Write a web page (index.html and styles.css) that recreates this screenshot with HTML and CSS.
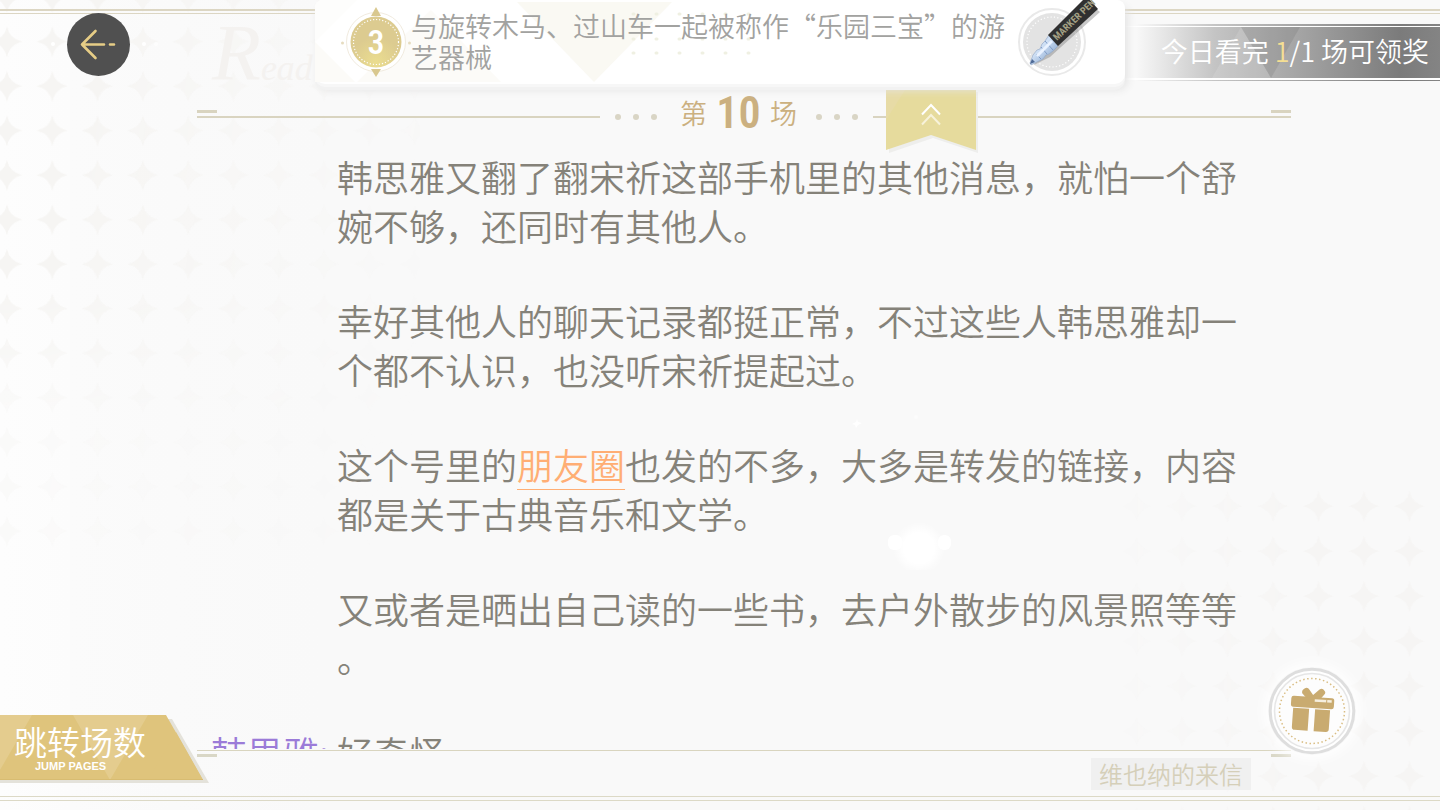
FILE: index.html
```html
<!DOCTYPE html>
<html lang="zh-CN">
<head>
<meta charset="utf-8">
<title>维也纳的来信</title>
<meta name="viewport" content="width=device-width, initial-scale=1">
<link rel="stylesheet" href="styles.css">
</head>
<body>
<div class="reader">
  <svg class="stars stars-left" aria-hidden="true">
    <defs>
      <pattern id="star-a" width="45.3" height="44.5" patternUnits="userSpaceOnUse" x="-15.6" y="19.5">
        <path d="M22.600 7Q25 19.500 38 22.200Q25 25 22.600 38Q20 25 7 22.200Q20 19.500 22.600 7Z" fill="#f6f5f3"/>
      </pattern>
    </defs>
    <rect width="100%" height="100%" fill="url(#star-a)"/>
  </svg>
  <svg class="stars stars-right" aria-hidden="true">
    <defs>
      <pattern id="star-b" width="45.5" height="45" patternUnits="userSpaceOnUse" x="4" y="4">
        <path d="M22.600 7Q25 19.500 38 22.200Q25 25 22.600 38Q20 25 7 22.200Q20 19.500 22.600 7Z" fill="#f6f5f4"/>
      </pattern>
    </defs>
    <rect width="100%" height="100%" fill="url(#star-b)"/>
  </svg>
  <svg class="glow" viewBox="0 0 120 170" aria-hidden="true">
    <defs><radialGradient id="soft"><stop offset=".6" stop-color="#fff"/><stop offset="1" stop-color="#fff" stop-opacity="0"/></radialGradient></defs>
    <circle cx="79" cy="148" r="26" fill="url(#soft)"/>
    <rect x="48" y="135" width="14" height="15" rx="6" fill="#fff"/>
    <rect x="98" y="135" width="13" height="15" rx="6" fill="#fff"/>
    <path d="M12 24l4-2 1-3 1 3 4 1-4 2-2 3-1-3z" fill="#fff"/>
    <circle cx="76" cy="17" r="2" fill="#fcfcfc"/>
  </svg>

  <header class="topbar">
    <div class="corner">
      <button class="back" type="button" aria-label="返回">
        <svg viewBox="0 0 63 63" fill="none" stroke="#e6cd86" stroke-width="2.600" stroke-linecap="round" stroke-linejoin="round" aria-hidden="true">
          <path d="M28.500 18L15 31.500L28.500 45M15 31.500H37M43 31.500H47"/>
        </svg>
      </button>
      <i class="spark"></i>
      <span class="script"><b>R</b>ead</span>
    </div>

    <section class="hint">
      <svg class="hint-art" viewBox="0 0 810 84" aria-hidden="true">
        <path d="M0 42L40 82H0zM42 82L78 46L114 82zM78 46L116 10L186 82H114z" fill="#fcfbf8"/>
        <path d="M0 42L42 0H8Q0 0 0 8z" fill="#fdfdfc"/>
        <path d="M202 2H357L279 82z" fill="#faf9f3"/>
        <g stroke="#eff0e2" stroke-width="3" stroke-linecap="round" stroke-dasharray="1 22">
          <path d="M318 14H436M318 39H436M318 53H436"/>
        </g>
      </svg>
      <svg class="badge" viewBox="0 0 70 76" role="img" aria-label="3">
        <defs><radialGradient id="gold" cy=".9"><stop stop-color="#ebdd8f"/><stop offset="1" stop-color="#dccb90"/></radialGradient></defs>
        <circle cx="35" cy="38" r="29.500" fill="#fff" stroke="#f1ebdf"/>
        <circle cx="35" cy="38" r="25.500" fill="url(#gold)"/>
        <circle cx="35" cy="38" r="22.500" fill="none" stroke="#fff" stroke-width="1.200" stroke-dasharray="1.200 1.900"/>
        <path d="M35 3l5 9H30zM35 73l5-8H30z" fill="#d9c88f"/>
        <circle cx="1.500" cy="39" r="1.500" fill="#e6dcc0"/><circle cx="68.500" cy="39" r="1.500" fill="#e6dcc0"/>
        <text class="badge-number" x="35" y="50" text-anchor="middle">3</text>
      </svg>
      <p class="hint-text">与旋转木马、过山车一起被称作“乐园三宝”的游艺器械</p>
      <svg class="pen" viewBox="0 0 100 84" role="img" aria-label="Marker pen">
        <defs>
          <linearGradient id="tube" x1="0" y1="0" x2="1" y2="1"><stop stop-color="#8da7cd"/><stop offset=".4" stop-color="#cfe0f5"/><stop offset="1" stop-color="#6f91bf"/></linearGradient>
        </defs>
        <circle cx="42" cy="42" r="33" fill="#fff" stroke="#e9e9e9" stroke-width="2"/>
        <circle cx="42" cy="42" r="29" fill="#e3e3e3"/>
        <circle cx="42" cy="42" r="25" fill="none" stroke="#fff" stroke-width="1.200" stroke-dasharray="1.200 2.200"/>
        <path d="M24 65L40 57L51 47L90 12L85 8L45 44L26 62z" fill="#777" opacity=".4"/>
        <path d="M20 63L23 55L27 50L30 49L32 44L35 41L39 35L48 46L43 51L39 54L36 55L33 59L29 61L21 65z" fill="url(#tube)" stroke="#8fa5c5" stroke-width=".6"/>
        <path d="M20 64L22 59L25 62z" fill="#4e6a96"/>
        <path d="M26 54L31 59M31 47L37 54M35 41L43 50" stroke="#7f9bc6" stroke-width="1" fill="none"/>
        <path d="M27 56L42 41" stroke="#e9f2ff" stroke-width="3"/>
        <path d="M38 35L73 0H80L88 9L48 46z" fill="#303030"/>
        <text class="pen-text" transform="translate(47 41) rotate(-44)">MARKER PEN</text>
      </svg>
    </section>

    <div class="reward">
      <svg class="reward-art" viewBox="0 0 315 51" preserveAspectRatio="none" aria-hidden="true">
        <path d="M116 0L87 51H146z" fill="#fff" opacity=".12"/>
        <path d="M116 0H175L146 51z" fill="#555" opacity=".16"/>
      </svg>
      <span class="reward-text">今日看完 <em>1</em>/1 场可领奖</span>
    </div>
  </header>

  <div class="chapter">
    <div class="rule rule-start"></div>
    <div class="dots"><i></i><i></i><i></i></div>
    <h1 class="chapter-title">第<span class="chapter-number">10</span>场</h1>
    <div class="dots"><i></i><i></i><i></i></div>
    <div class="rule rule-end">
      <button class="ribbon" type="button" aria-label="收起">
        <svg viewBox="0 0 94 64" aria-hidden="true">
          <path d="M3 2H92V63L47 48L3 63z" fill="#eeeeec"/>
          <path d="M0 0H90V60L45 45L0 60z" fill="#e6db9d"/>
          <path d="M0 0H19L0 30z" fill="#e7dba6"/>
          <path d="M36 24.500L45 15L54 24.500" fill="none" stroke="#fff" stroke-width="2"/>
          <path d="M36 34.500L45 25L54 34.500" fill="none" stroke="#f7f2da" stroke-width="2"/>
        </svg>
      </button>
    </div>
  </div>

  <main class="story">
    <p>韩思雅又翻了翻宋祈这部手机里的其他消息，就怕一个舒婉不够，还同时有其他人。</p>
    <p>幸好其他人的聊天记录都挺正常，不过这些人韩思雅却一个都不认识，也没听宋祈提起过。</p>
    <p>这个号里的<a class="keyword" href="#moments">朋友圈</a>也发的不多，大多是转发的链接，内容都是关于古典音乐和文学。</p>
    <p>又或者是晒出自己读的一些书，去户外散步的风景照等等。</p>
    <p class="line"><span class="speaker">韩思雅:</span><span>好奇怪</span></p>
  </main>

  <footer class="bottom">
    <div class="bottom-rule"></div>
    <div class="book-name">维也纳的来信</div>
  </footer>

  <button class="jump" type="button">
    <svg class="jump-art" viewBox="0 0 210 69" aria-hidden="true">
      <path d="M0 60V68H209L172 4H160z" fill="#e4e2da"/>
      <path d="M0 0H166L203 65H0z" fill="#dfc47c"/>
      <path d="M0 0H32L0 55zM73 0H148L110 65z" fill="#e5d096" opacity=".7"/>
      <path d="M148 65L176 17L203 65z" fill="#dfc47c"/>
      <path d="M0 64.500H203" stroke="#d8bc71"/>
    </svg>
    <span class="jump-label">跳转场数</span>
    <span class="jump-sub">JUMP PAGES</span>
  </button>

  <button class="gift" type="button" aria-label="礼物">
    <svg viewBox="-44 -44 88 88" aria-hidden="true">
      <circle r="41.800" fill="#fff" stroke="#dedede" stroke-width="3"/>
      <circle r="37.500" fill="#fdfdfd" stroke="#e6e6e6" stroke-width="1.600"/>
      <circle r="32.500" fill="none" stroke="#d9bd83" stroke-width="1.500" stroke-dasharray="1.500 2.500"/>
      <g fill="#c9ab70" transform="rotate(4)">
        <rect x="-21.500" y="-14" width="43" height="11" rx="2.500"/>
        <path d="M-19-2H-3V20H-16Q-19 20-19 17zM3-2H18V17Q18 20 15 20H3z"/>
        <path d="M-7-13L-11-17Q-12-20-9-22Q-6-24-4-21L0-16L6-22Q9-24 11-21Q13-19 11-17L8-13z"/>
        <path d="M2-12H19V-9.500H2z" fill="#f6efdf"/>
        <path d="M14-12V-9" stroke="#c9ab70" stroke-width="1"/>
      </g>
    </svg>
  </button>
</div>
</body>
</html>
```
FILE: styles.css
```css
* { box-sizing: border-box; }

body {
  margin: 0;
  font-family: "Noto Sans CJK SC", "Noto Sans", sans-serif;
  font-weight: 350;
  color: #858279;
}

button {
  padding: 0;
  border: 0;
  background: none;
  font: inherit;
  cursor: pointer;
}

svg { display: block; }

.reader {
  position: relative;
  display: flex;
  flex-direction: column;
  height: 100vh;
  overflow: hidden;
  isolation: isolate;
  background: linear-gradient(90deg, #fdfdfd 0, #fcfcfc 70px, #fbfbfb 70px, #fafafa 173px, #f9f9f9 320px);
}

/* Backdrop */
.stars { position: absolute; z-index: -1; }
.stars-left {
  left: 0;
  top: 0;
  width: 420px;
  height: 560px;
  mask-image: linear-gradient(100deg, #000 20%, transparent 95%), linear-gradient(#000 50%, rgba(0, 0, 0, .3) 75%);
  mask-composite: intersect;
}
.stars-right {
  right: 0;
  bottom: 0;
  width: 330px;
  height: 330px;
  mask-image: linear-gradient(90deg, transparent, #000 60%);
}
.glow {
  position: absolute;
  z-index: -1;
  left: 840px;
  top: 400px;
  width: 120px;
}

/* Top bar */
.topbar {
  display: grid;
  grid-template-columns: 35fr 90fr 35fr;
  align-items: start;
  height: 90px;
  background:
    linear-gradient(#dcd6c3, #dcd6c3) 0 9px / 100% 2px no-repeat,
    linear-gradient(#dcd6c3, #dcd6c3) 0 13px / 100% 1px no-repeat;
}
.corner {
  display: flex;
  align-items: flex-start;
  padding: 13px 0 0 67px;
}
.back {
  flex: none;
  width: 63px;
  height: 63px;
  border-radius: 50%;
  background: #505050;
}
.spark {
  flex: none;
  width: 4px;
  height: 4px;
  margin: 29px 0 0 12px;
  border-radius: 50%;
  background: #fff;
  box-shadow: 12px 0 #fdfdfd, -91px 0 #fff;
}
.script {
  margin-left: 66px;
  color: #f4f2f0;
  font: italic 36px/80px "Liberation Serif", serif;
  white-space: nowrap;
}
.script b { font-size: 80px; font-weight: 400; }

.hint {
  position: relative;
  z-index: 2;
  display: flex;
  align-items: flex-start;
  height: 84px;
  padding-left: 26px;
  border-radius: 8px 8px 10px 10px;
  background: #fff;
  box-shadow: 0 3px #f7f7f7, 0 6px #f2f2f2, 3px 6px 8px #e4e4e4;
}
.hint-art {
  position: absolute;
  inset: 0;
  z-index: -1;
  width: 100%;
}
.badge { flex: none; width: 70px; margin-top: 4px; }
.badge-number {
  font: 500 34px "Roboto Condensed", "Liberation Sans Narrow", "DejaVu Sans Condensed", sans-serif;
  fill: #fff;
}
.hint-text {
  width: 22em;
  margin: 10px 0 0;
  color: #a2a2a0;
  font-size: 27px;
  line-height: 31px;
}
.pen { flex: none; width: 100px; margin-left: 5px; }
.pen-text {
  font: 700 10px "Roboto Condensed", "Liberation Sans Narrow", "DejaVu Sans Condensed", sans-serif;
  fill: #a29f83;
}

.reward {
  position: relative;
  display: flex;
  justify-content: flex-end;
  align-items: center;
  height: 57px;
  margin-top: 24px;
  padding: 0 11px 4px 0;
  background:
    linear-gradient(#fff, #fff) 0 2px / 100% 1px no-repeat,
    linear-gradient(#fff, #fff) 0 54px / 100% 2px no-repeat,
    linear-gradient(90deg, #f9f9f9 10px, #c4c4c4 90px, #a6a6a6 170px, #7b7b7b 275px, #848484);
}
.reward-art {
  position: absolute;
  left: 0;
  top: 3px;
  width: 100%;
  height: 51px;
}
.reward-text {
  position: relative;
  color: #fff;
  font-size: 27px;
  line-height: 40px;
  white-space: nowrap;
}
.reward-text em { color: #f5df93; font-style: normal; }

/* Chapter heading */
.chapter {
  display: flex;
  flex: none;
  align-items: center;
  height: 54px;
  margin: 0 149px 0 197px;
}
.rule {
  position: relative;
  flex: 403 1 0;
  height: 14px;
  background:
    linear-gradient(#d9d4c0, #d9d4c0) 0 6px / 100% 2px no-repeat,
    linear-gradient(#d9d4c0, #d9d4c0) 0 0 / 20px 3px no-repeat;
}
.rule-end {
  flex-grow: 418;
  background-position: 0 6px, 100% 0;
}
.dots { display: flex; gap: 12px; margin: 0 15px; }
.dots i { width: 6px; height: 6px; border-radius: 50%; background: #d9d5c5; }
.chapter-title {
  display: flex;
  align-items: center;
  justify-content: space-between;
  width: 117px;
  margin: 0 4px 0 8px;
  padding-bottom: 8px;
  color: #cbb080;
  font-size: 27px;
  font-weight: 350;
  line-height: 46px;
}
.chapter-number {
  font: 600 44px/46px "Roboto Condensed", "Liberation Sans Narrow", "DejaVu Sans Condensed", sans-serif;
}
.ribbon {
  position: absolute;
  left: 13px;
  top: -20px;
  width: 94px;
}

/* Story */
.story {
  flex: 1;
  min-height: 0;
  overflow: hidden;
  padding: 8px 149px 0 337px;
  font-size: 36px;
  line-height: 49px;
}
.story p { width: 910px; max-width: 100%; margin: 0 0 46px; line-break: anywhere; }
.keyword {
  color: #ffae74;
  text-decoration: underline 1px;
  text-underline-offset: 9px;
}
.story .line { display: flex; margin-left: -126px; }
.speaker { flex: none; width: 126px; color: #9b7bd8; }

/* Footer */
.bottom {
  flex: none;
  height: 61px;
  padding: 1px 149px 0 197px;
  background:
    linear-gradient(#dcd9c6, #dcd9c6) 0 47px / 100% 1px no-repeat,
    linear-gradient(#dcd9c6, #dcd9c6) 0 51px / 100% 1px no-repeat;
}
.bottom-rule {
  height: 8px;
  border-top: 1px solid #d9d5bf;
  background:
    linear-gradient(#d9d7c6, #d9d7c6) 0 3px / 20px 3px no-repeat,
    linear-gradient(#d9d7c6, #d9d7c6) 100% 3px / 20px 3px no-repeat;
}
.book-name {
  width: max-content;
  margin: 0 40px 0 auto;
  padding: 0 8px;
  background: #f0f0f0;
  color: #d5cfb9;
  font-size: 24px;
  line-height: 32px;
}

/* Floating controls */
.jump {
  position: absolute;
  left: 0;
  bottom: 26px;
  display: flex;
  flex-direction: column;
  align-items: flex-start;
  width: 210px;
  height: 69px;
  color: #fff;
}
.jump-art { position: absolute; inset: 0; z-index: -1; width: 210px; }
.jump-label { padding: 7px 0 0 14px; font-size: 33px; line-height: 38px; }
.jump-sub {
  padding-left: 35px;
  font: 700 11px/12px "Liberation Sans", Arial, sans-serif;
}
.gift {
  position: absolute;
  right: 84px;
  bottom: 55px;
  width: 88px;
  height: 88px;
  border-radius: 50%;
  box-shadow: 0 0 14px 4px #fff;
}
```
